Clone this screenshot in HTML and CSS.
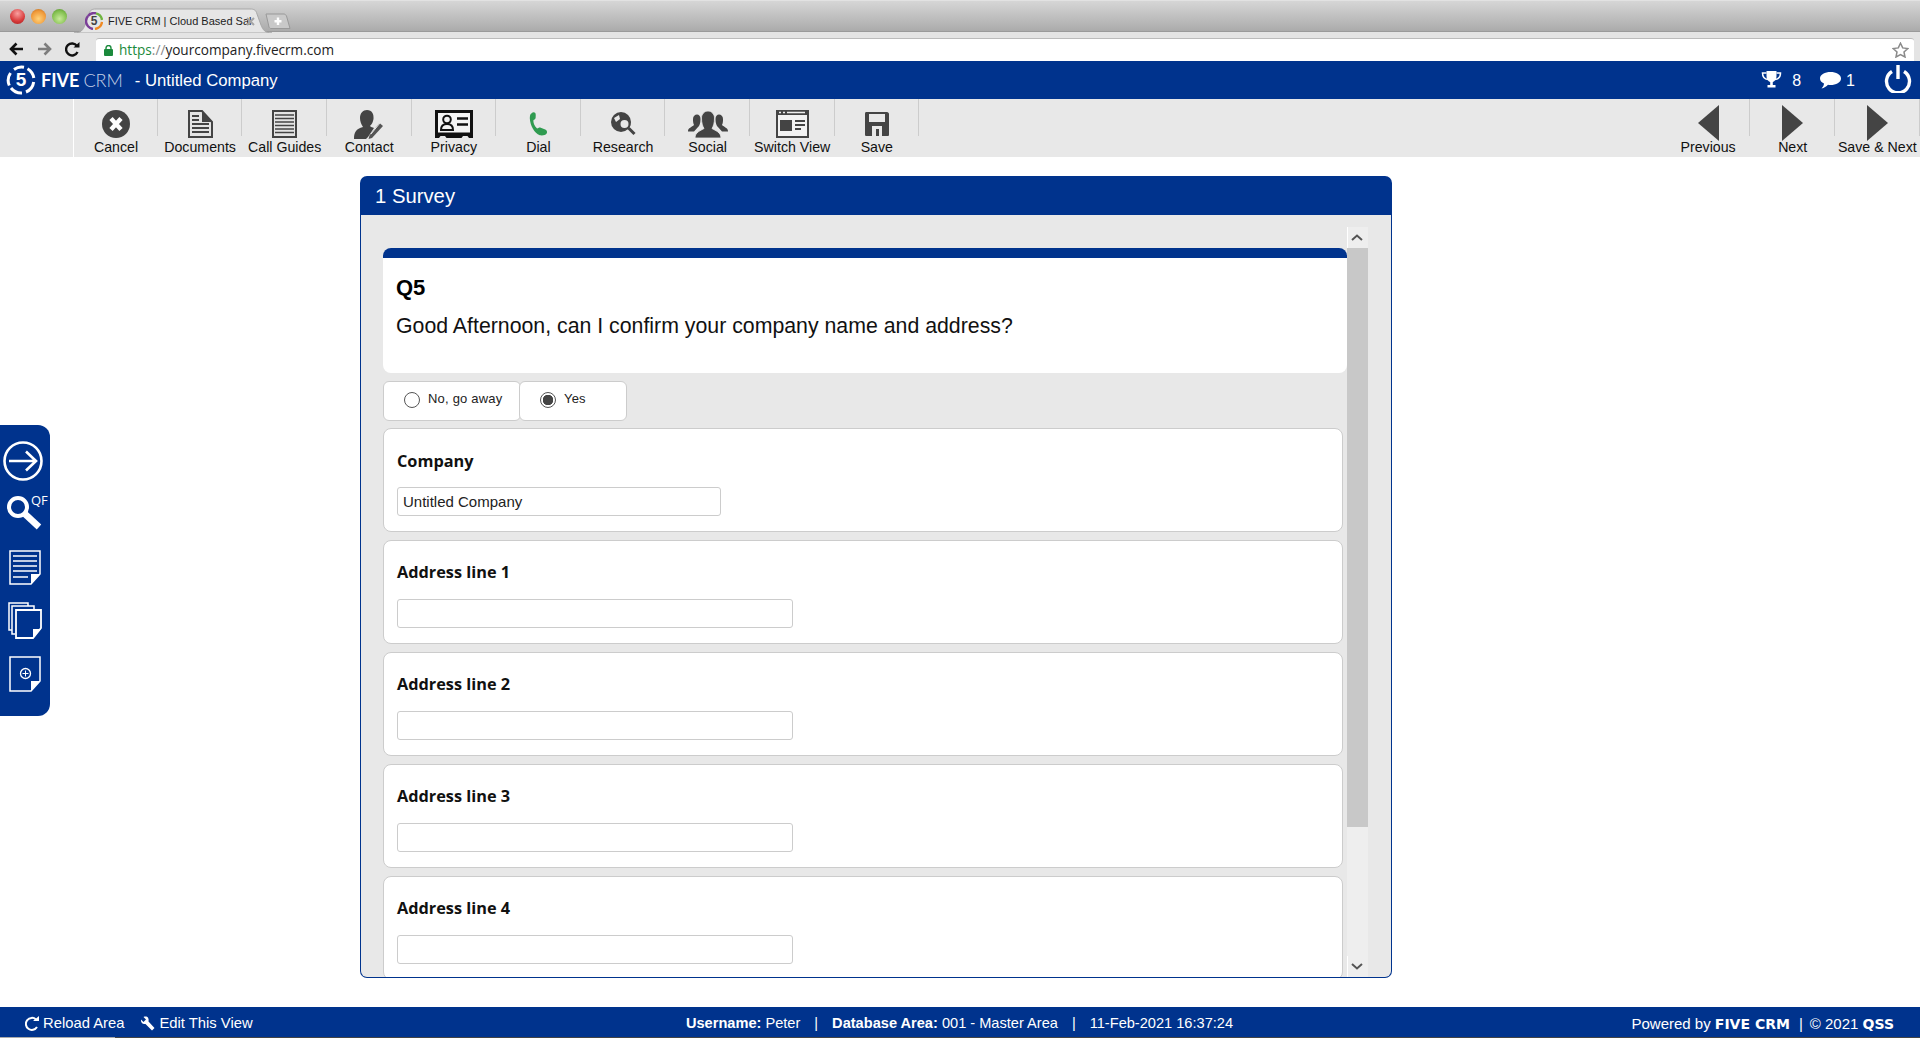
FILE: index.html
```html
<!DOCTYPE html>
<html lang="en">
<head>
<meta charset="utf-8">
<title>FIVE CRM | Cloud Based Sales</title>
<link rel="stylesheet" href="styles.css">
</head>
<body>
<div class="tabstrip">
  <span class="dot dot-red"></span><span class="dot dot-amber"></span><span class="dot dot-green"></span>
  <div class="tab">
    <svg class="tab-shape" width="198" height="25" viewBox="0 0 198 25"><path d="M0 25C7 25 9 22 11 17L15 6C16 2 18 1 22 1H176C180 1 182 2 183 6L187 17C189 22 191 25 198 25Z" fill="#e6e6e6" stroke="#a8a8a8"/></svg>
    <svg class="favicon" width="18" height="18" viewBox="0 0 18 18"><g fill="none" stroke-width="2.4"><path d="M3 4A8 8 0 0 1 11 1.3" stroke="#7b3f98"/><path d="M11 1.3A8 8 0 0 1 17 8" stroke="#6fb43f"/><path d="M17 10A8 8 0 0 1 10 17" stroke="#f08a24"/><path d="M8 17A8 8 0 0 1 1 9A8 8 0 0 1 3 4" stroke="#7b3f98"/></g><text x="9" y="13" class="favicon-5">5</text></svg>
    <span class="tab-title">FIVE CRM | Cloud Based Sal</span>
    <svg class="tab-close" width="9" height="9" viewBox="0 0 9 9"><path d="M1 1L8 8M8 1L1 8" stroke="#a5a5a5" stroke-width="2"/></svg>
  </div>
  <svg class="newtab" width="26" height="17" viewBox="0 0 26 17"><path d="M1 1H19C20 1 21 2 21.500 3L25 15.500H6C5 15.500 4.500 15 4 14Z" fill="#c9c9c9" stroke="#999"/><path d="M13 4.500V12M9.500 8.200H16.500" stroke="#fff" stroke-width="2.400"/></svg>
</div>

<div class="navbar">
  <svg class="nav-ico" width="15" height="14" viewBox="0 0 15 14"><path d="M14 7H3M7.500 1.500L2 7L7.500 12.500" fill="none" stroke="#111" stroke-width="2.600"/></svg>
  <svg class="nav-ico" width="15" height="14" viewBox="0 0 15 14"><path d="M1 7H12M7.500 1.500L13 7L7.500 12.500" fill="none" stroke="#7d7d7d" stroke-width="2.600"/></svg>
  <svg class="nav-ico nav-ico-last" width="15" height="15" viewBox="0 0 15 15"><path d="M12.500 10A6 6 0 1 1 12 4" fill="none" stroke="#111" stroke-width="2.400"/><path d="M8.500 5.500H14.500V0Z" fill="#111"/></svg>
  <div class="urlbar">
    <svg width="9" height="11" viewBox="0 0 9 11"><rect y="4" width="9" height="7" rx="1" fill="#1b8a3c"/><path d="M2 5V3A2.500 2.500 0 0 1 7 3V5" fill="none" stroke="#1b8a3c" stroke-width="1.400"/></svg>
    <span class="url"><span class="url-https">https</span><span class="url-sep">://</span>yourcompany.fivecrm.com</span>
    <svg class="star" width="17" height="16" viewBox="0 0 17 16"><path d="M8.500 1.200L10.700 5.900L15.800 6.500L12 10L13 15L8.500 12.500L4 15L5 10L1.200 6.500L6.300 5.900Z" fill="none" stroke="#8a8a8a" stroke-width="1.500"/></svg>
  </div>
</div>

<header class="appbar">
  <svg class="logo" width="30" height="30" viewBox="0 0 30 30"><g fill="none" stroke="#fff" stroke-width="3"><path d="M8 4.500A13 13 0 0 1 18 2.300"/><path d="M21.500 3.700A13 13 0 0 1 27.800 13"/><path d="M27.700 17A13 13 0 0 1 20 27"/><path d="M16 28A13 13 0 0 1 5 23"/><path d="M3.300 20.500A13 13 0 0 1 4.500 8"/></g><text x="15" y="21" class="logo-5">5</text></svg>
  <span class="brand"><b>FIVE</b><span class="brand-crm">CRM</span></span>
  <span class="app-title">- Untitled Company</span>
  <div class="appbar-right">
    <svg width="21" height="18" viewBox="0 0 21 18"><path d="M5.500 0H15.500V5C15.500 9 13 10.500 11.800 11V14H14.500V16.500H6.500V14H9.200V11C8 10.500 5.500 9 5.500 5Z" fill="#fff"/><path d="M5.500 2H1.500C1.500 6 3 8 7 8.500M15.500 2H19.500C19.500 6 18 8 14 8.500" fill="none" stroke="#fff" stroke-width="1.500"/></svg>
    <span class="count count-trophy">8</span>
    <svg width="21" height="17" viewBox="0 0 21 17"><path d="M10.500 0C16 0 21 2.500 21 6.500C21 10.500 16 13 10.500 13C9.500 13 8.500 13 8 12.800C6.500 14.500 4 16 1.500 16.500C3 15 3.800 13.500 4 11.500C1.500 10.500 0 8.500 0 6.500C0 2.500 5 0 10.500 0Z" fill="#fff"/></svg>
    <span class="count count-msg">1</span>
    <svg class="power" width="28" height="28" viewBox="0 0 28 28"><path d="M8 6.500A11.500 11.500 0 1 0 20 6.500" fill="none" stroke="#fff" stroke-width="3.400"/><path d="M14 0V14" stroke="#fff" stroke-width="3.400"/></svg>
  </div>
</header>

<nav class="toolbar">
  <div class="tool">
    <span class="tool-ico"><svg width="28" height="28" viewBox="0 0 28 28"><circle cx="14" cy="14" r="14" fill="#444"/><path d="M9 8.500L19 19.500M19 8.500L9 19.500" stroke="#fff" stroke-width="4.400"/></svg></span>
    <span class="tool-label">Cancel</span>
  </div>
  <div class="tool">
    <span class="tool-ico"><svg width="25" height="28" viewBox="0 0 25 28"><path d="M1 1H14L24 12V27H1Z" fill="#e4e4e4" stroke="#444" stroke-width="2"/><path d="M14 1V12H24Z" fill="#444"/><path d="M4 6H11M4 10H11M4 14H21M4 18H21M4 22H21" stroke="#444" stroke-width="1.800"/></svg></span>
    <span class="tool-label">Documents</span>
  </div>
  <div class="tool">
    <span class="tool-ico"><svg width="25" height="28" viewBox="0 0 25 28"><rect x="1" y="1" width="23" height="26" fill="#e4e4e4" stroke="#444" stroke-width="2"/><path d="M3 5H22M3 8.500H22M3 12H22M3 15.500H22M3 19H22M3 22.500H22" stroke="#444" stroke-width="1.700"/></svg></span>
    <span class="tool-label">Call Guides</span>
  </div>
  <div class="tool">
    <span class="tool-ico"><svg width="30" height="29" viewBox="0 0 30 29"><path d="M13 0C18 0 20 4 19.500 9C19 12 18 14 16 16C17 17 18.500 17.500 20 18L14 27L12 29H0C0 22 2 19 9 17C7 14 6 11 6 8C6 3 9 0 13 0Z" fill="#444"/><path d="M18 28L14.500 29L15.500 25.500L25.500 13L29 16Z" fill="#555"/><path d="M17 24L26 13" stroke="#e8e8e8" stroke-width="1"/></svg></span>
    <span class="tool-label">Contact</span>
  </div>
  <div class="tool">
    <span class="tool-ico"><svg width="38" height="28" viewBox="0 0 38 28"><path d="M1.500 1.500H36.500V24H1.500Z" fill="#f4f4f4" stroke="#111" stroke-width="3"/><path d="M0 24H38V28H34L32.500 26H28L26.500 28H11.500L10 26H5.500L4 28H0Z" fill="#111"/><circle cx="12" cy="9.500" r="3.800" fill="none" stroke="#111" stroke-width="2"/><path d="M6 20C6 15 9 14 12 14C15 14 18 15 18 20Z" fill="none" stroke="#111" stroke-width="2"/><path d="M22 8.500H33M22 14.500H33" stroke="#111" stroke-width="2.600"/></svg></span>
    <span class="tool-label">Privacy</span>
  </div>
  <div class="tool">
    <span class="tool-ico"><svg width="20" height="26" viewBox="0 0 22 26"><path d="M3 2C4 1 5 0 6 0C8 0 8.500 1 8.500 3L8.400 6C8.400 7.500 7 8 6 8.500C5.500 11 7 15 10 18C11 17.500 12.500 16.500 14 17L19 19C21 20 21.500 22 20.500 23.500C19 25.500 16 26 13 25.500C7 23 2.500 15 2 7C2 5 2.200 3 3 2Z" fill="#2f9b50"/></svg></span>
    <span class="tool-label">Dial</span>
  </div>
  <div class="tool">
    <span class="tool-ico"><svg width="25" height="24" viewBox="0 0 25 24"><circle cx="10" cy="10" r="10" fill="#444"/><path d="M3 6L8 3L9 7L5 10ZM13 14L16 13L15 18Z" fill="#e8e8e8"/><circle cx="13.500" cy="12" r="5" fill="#e8e8e8" stroke="#444" stroke-width="2"/><path d="M17.500 16L23.500 22" stroke="#444" stroke-width="3"/></svg></span>
    <span class="tool-label">Research</span>
  </div>
  <div class="tool">
    <span class="tool-ico"><svg width="40" height="27" viewBox="0 0 40 27"><path d="M0 20C0 17 4 16 6 14C5 12 5 10 5 8C5 5 7 3.500 9 3.500C11 3.500 12.500 5 12.500 8C12.500 11 12 13 11 15L6 20.500H0ZM40 20C40 17 36 16 34 14C35 12 35 10 35 8C35 5 33 3.500 31 3.500C29 3.500 27.500 5 27.500 8C27.500 11 28 13 29 15L34 20.500H40Z" fill="#444"/><path d="M7 27C7 21 13 19.500 16 17.500C14.500 15 13.500 12 13.500 7C13.500 3 16.500 0 20 0C23.500 0 26.500 3 26.500 7C26.500 12 25.500 15 24 17.500C27 19.500 33 21 33 27Z" fill="#444" stroke="#e8e8e8" stroke-width="0.800"/></svg></span>
    <span class="tool-label">Social</span>
  </div>
  <div class="tool">
    <span class="tool-ico"><svg width="33" height="28" viewBox="0 0 33 28"><path d="M1 1H32V27H1Z" fill="#f2f2f2" stroke="#444" stroke-width="2"/><path d="M0 0H33V5H0Z" fill="#444"/><path d="M3 2.500H5M7 2.500H9M11 2.500H29" stroke="#eee" stroke-width="1.500"/><rect x="4" y="10" width="12" height="11" fill="#444"/><path d="M19 11H29M19 15H29M19 19H25" stroke="#444" stroke-width="2"/></svg></span>
    <span class="tool-label">Switch View</span>
  </div>
  <div class="tool">
    <span class="tool-ico"><svg width="24" height="24" viewBox="0 0 24 24"><path d="M0 1.500C0 .5.500 0 1.500 0H22C23 0 24 1 24 2V22.500C24 23.500 23.500 24 22.500 24H1.500C.5 24 0 23.500 0 22.500Z" fill="#444"/><rect x="4" y="2" width="16" height="8" fill="#e8e8e8"/><path d="M7 24V14H17V24Z" fill="#e8e8e8"/><rect x="11" y="17" width="3" height="7" fill="#444"/></svg></span>
    <span class="tool-label">Save</span>
  </div>
  <div class="tool-nav">
    <div class="tool">
      <span class="tool-ico"><svg class="tri" width="21" height="36" viewBox="0 0 21 36"><path d="M21 0V36L0 18Z" fill="#444"/></svg></span>
      <span class="tool-label">Previous</span>
    </div>
    <div class="tool">
      <span class="tool-ico"><svg class="tri" width="21" height="36" viewBox="0 0 21 36"><path d="M0 0V36L21 18Z" fill="#444"/></svg></span>
      <span class="tool-label">Next</span>
    </div>
    <div class="tool">
      <span class="tool-ico"><svg class="tri" width="21" height="36" viewBox="0 0 21 36"><path d="M0 0V36L21 18Z" fill="#444"/></svg></span>
      <span class="tool-label">Save &amp; Next</span>
    </div>
  </div>
</nav>

<aside class="sidebar">
  <svg width="42" height="42" viewBox="0 0 42 42"><circle cx="21" cy="21" r="18.500" fill="none" stroke="#fff" stroke-width="2.600"/><path d="M7 21H33M24 11.500L34 21L24 30.500" fill="none" stroke="#fff" stroke-width="2.600"/></svg>
  <div class="side-search">
    <svg width="38" height="36" viewBox="0 0 38 36"><circle cx="13" cy="12" r="9" fill="none" stroke="#fff" stroke-width="4"/><path d="M20 19L34 32" stroke="#fff" stroke-width="6.500"/></svg>
    <span class="qf">QF</span>
  </div>
  <svg width="32" height="35" viewBox="0 0 32 35"><path d="M1 1H31V24L22 34H1Z" fill="none" stroke="#fff" stroke-width="1.500"/><path d="M22 34V24H31Z" fill="#fff"/><path d="M4 6H28M4 11H28M4 16H28M4 21H28M4 27H19" stroke="#fff" stroke-width="1.600"/></svg>
  <svg width="34" height="37" viewBox="0 0 34 37"><path d="M4 28H1V1H20V4" fill="none" stroke="#fff" stroke-width="1.500"/><path d="M7 32H4V4H26V8" fill="none" stroke="#fff" stroke-width="1.500"/><path d="M8 8H33V26L25 36H8Z" fill="none" stroke="#fff" stroke-width="1.800"/><path d="M25 36V27H33Z" fill="#fff"/></svg>
  <svg width="32" height="36" viewBox="0 0 32 36"><path d="M1 1H31V25L22 35H1Z" fill="none" stroke="#fff" stroke-width="1.500"/><path d="M22 35V25H31Z" fill="#fff"/><circle cx="16.500" cy="17.500" r="5" fill="none" stroke="#fff" stroke-width="1.300"/><path d="M16.500 14.500V20.500M13.500 17.500H19.500" stroke="#fff" stroke-width="1"/></svg>
</aside>

<main class="content">
  <section class="panel">
    <h1 class="panel-head">1 Survey</h1>
    <div class="panel-body">
      <div class="scroll-view">
        <div class="q-card">
          <div class="q-code">Q5</div>
          <div class="q-text">Good Afternoon, can I confirm your company name and address?</div>
        </div>
        <div class="radio-group">
          <label class="radio radio-no"><span class="radio-mark"></span><span class="radio-text">No, go away</span></label>
          <label class="radio radio-yes"><span class="radio-mark radio-mark-on"></span><span class="radio-text">Yes</span></label>
        </div>
        <div class="field field-first"><div class="field-label">Company</div><div class="input input-short">Untitled Company</div></div>
        <div class="field"><div class="field-label">Address line 1</div><div class="input"></div></div>
        <div class="field"><div class="field-label">Address line 2</div><div class="input"></div></div>
        <div class="field"><div class="field-label">Address line 3</div><div class="input"></div></div>
        <div class="field"><div class="field-label">Address line 4</div><div class="input"></div></div>
      </div>
      <div class="scrollbar">
        <div class="sb-btn"><svg width="12" height="7" viewBox="0 0 12 7"><path d="M1 6L6 1.500L11 6" fill="none" stroke="#555" stroke-width="2"/></svg></div>
        <div class="sb-thumb"></div>
        <div class="sb-track"></div>
        <div class="sb-btn"><svg width="12" height="7" viewBox="0 0 12 7"><path d="M1 1L6 5.500L11 1" fill="none" stroke="#555" stroke-width="2"/></svg></div>
      </div>
    </div>
  </section>
</main>

<footer class="footer">
  <div class="foot-left">
    <span class="foot-link"><svg width="14" height="15" viewBox="0 0 14 15"><path d="M12 11A6 6 0 1 1 11 3.500" fill="none" stroke="#fff" stroke-width="2"/><path d="M8 5H14V0Z" fill="#fff"/></svg>Reload Area</span>
    <span class="foot-link"><svg width="15" height="15" viewBox="0 0 15 15"><path d="M1 3.500L3.500 6L6 3.500L3.500 1C5.500 0 8 .5 8.500 3C8.800 4 8.500 5 8.500 5.500L14.500 12L12 14.500L5.500 8C3.500 8.500 .5 7 1 3.500Z" fill="#fff"/></svg>Edit This View</span>
  </div>
  <div class="foot-center"><b>Username:</b> Peter<span class="foot-sep">|</span><b>Database Area:</b> 001 - Master Area<span class="foot-sep">|</span>11-Feb-2021 16:37:24</div>
  <div class="foot-right">Powered by <b class="foot-strong">FIVE CRM</b><span class="foot-sep-small">|</span>© 2021 <b class="foot-strong">QSS</b></div>
</footer>
</body>
</html>
```
FILE: styles.css
```css
* { box-sizing: border-box; }
html, body { margin: 0; height: 100%; }
body {
  height: 1038px;
  display: flex;
  flex-direction: column;
  overflow: hidden;
  background: #fff;
  color: #111;
  font-family: "Liberation Sans", Arial, sans-serif;
}

/* browser chrome */
.tabstrip {
  height: 32px;
  flex: none;
  display: flex;
  align-items: flex-start;
  padding: 10px 0 0 10px;
  background: linear-gradient(#d6d6d6, #ababab);
  border-top: 1px solid #e2e2e2;
  border-bottom: 1px solid #9a9a9a;
}
.dot { width: 15px; height: 15px; border-radius: 50%; margin-right: 6px; flex: none; margin-top: -2px; }
.dot-red { background: radial-gradient(circle at 50% 30%, #f9a0a0, #d83a3a 60%, #a02020); }
.dot-amber { background: radial-gradient(circle at 50% 65%, #ffd27a, #f09a3a 60%, #b5651d); }
.dot-green { background: radial-gradient(circle at 50% 65%, #c8ea9a, #83c04f 60%, #4f8a2a); }
.tab {
  position: relative;
  width: 198px;
  height: 24px;
  margin: -3px 0 0 1px;
  padding: 4px 0 0 11px;
  display: flex;
  align-items: flex-start;
}
.tab-shape { position: absolute; left: 0; top: 0; }
.favicon, .tab-title, .tab-close { position: relative; }
.favicon { flex: none; }
.favicon-5 { font: bold 12px "Liberation Sans", sans-serif; fill: #444; text-anchor: middle; }
.tab-title { margin-left: 5px; font: 11px/18px "Liberation Sans", sans-serif; color: #222; white-space: nowrap; width: 134px; }
.tab-close { margin: 5px 0 0 4px; }
.newtab { margin: 2px 0 0 -7px; }

.navbar {
  height: 29px;
  flex: none;
  display: flex;
  align-items: flex-start;
  padding: 6px 6px 0 9px;
  background: #e4e4e4;
}
.nav-ico { flex: none; margin: 4px 13px 0 0; }
.nav-ico-last { margin-right: 16px; }
.urlbar {
  flex: 1;
  height: 23px;
  padding: 0 5px 0 8px;
  display: flex;
  align-items: center;
  background: #fff;
  border-top: 1px solid #bbb;
  border-radius: 3px 3px 0 0;
}
.url { margin-left: 6px; font: 13.600px/20px "Open Sans", sans-serif; color: #222; }
.url-https { color: #1b8a3c; }
.url-sep { color: #888; }
.star { margin-left: auto; }

/* application header */
.appbar {
  height: 38px;
  flex: none;
  display: flex;
  align-items: center;
  padding: 0 8px 0 6px;
  background: #00338d;
  color: #fff;
}
.logo-5 { font: bold 19px "Liberation Sans", sans-serif; fill: #fff; text-anchor: middle; }
.brand { margin-left: 5px; font: 18px/24px Lato, sans-serif; }
.brand b { font-weight: 700; }
.brand-crm { margin-left: 4px; font-weight: 300; color: #c4d0e6; }
.app-title { margin-left: 12px; padding-top: 1px; font-size: 16.700px; }
.appbar-right { margin-left: auto; display: flex; align-items: center; }
.count { font-size: 16px; }
.count-trophy { margin: 2px 19px 0 10px; }
.count-msg { margin: 2px 29px 0 5px; }
.power { margin-bottom: 2px; }

/* toolbar */
.toolbar {
  height: 58px;
  flex: none;
  display: flex;
  padding: 0 .4px 0 73.200px;
  background: #e8e8e8;
}
.toolbar > .tool:first-child { border-left: 1px solid #fff; }
.tool {
  width: 84.600px;
  flex: none;
  display: flex;
  flex-direction: column;
  align-items: center;
  padding-top: 10px;
  background: linear-gradient(#ccc, #ccc) right top / 1px 37px no-repeat;
}
.tool-ico { height: 30px; display: flex; align-items: center; justify-content: center; }
.tool-ico svg { display: block; }
.tool-ico .tri { margin-top: -2px; }
.tool-label { font-size: 14.200px; line-height: 16px; color: #111; white-space: nowrap; }
.tool-nav { margin-left: auto; display: flex; }

/* floating left rail */
.sidebar {
  position: absolute;
  left: 0;
  top: 425px;
  width: 50px;
  height: 291px;
  display: flex;
  flex-direction: column;
  align-items: flex-start;
  padding: 15px 0 0 2px;
  background: #00338d;
  border-radius: 0 12px 12px 0;
}
.sidebar > svg:nth-child(3) { margin: 19px 0 0 7px; }
.sidebar > svg:nth-child(4) { margin: 17px 0 0 6px; }
.sidebar > svg:nth-child(5) { margin: 17px 0 0 7px; }
.side-search { position: relative; margin: 13px 0 0 3px; height: 36px; }
.qf { position: absolute; left: 26px; top: -2px; color: #fff; font: 13px/14px "Open Sans", sans-serif; }

/* survey panel */
.content { flex: 1; min-height: 0; padding: 19px 0 0 360px; }
.panel { width: 1032px; height: 802px; display: flex; flex-direction: column; overflow: hidden; border-radius: 7px; background: #00338d; }
.panel-head { margin: 0; height: 39px; flex: none; padding-left: 15px; font-size: 20.300px; font-weight: 400; line-height: 40px; color: #fff; }
.panel-body {
  flex: 1;
  min-height: 0;
  display: flex;
  margin: 0 1px 1px;
  padding: 12px 23px 0 22px;
  background: #e8e8e8;
  border-radius: 0 0 6px 6px;
}
.scroll-view { width: 964px; flex: none; overflow: hidden; padding-top: 21px; }
.q-card {
  height: 125px;
  padding: 18px 13px 0;
  background: #fff;
  border-top: 10px solid #00338d;
  border-radius: 8px;
}
.q-code { font-size: 22px; font-weight: 700; line-height: 24px; color: #000; }
.q-text { margin-top: 14px; font-size: 21.300px; line-height: 24px; color: #111; }
.radio-group { display: flex; margin: 8px 0 7px; }
.radio {
  height: 40px;
  display: flex;
  align-items: flex-start;
  padding: 9px 0 0 20px;
  background: #fff;
  border: 1px solid #ccc;
  border-radius: 6px;
  font-size: 13px;
  color: #222;
}
.radio-no { width: 138px; }
.radio-yes { width: 108px; margin-left: -2px; }
.radio-mark { width: 16px; height: 16px; margin-top: 1px; border: 1px solid #555; border-radius: 50%; flex: none; }
.radio-mark-on { background: radial-gradient(circle, #444 0 5px, #fff 5.500px); }
.radio-text { margin-left: 8px; line-height: 15px; letter-spacing: .2px; }
.field {
  width: 960px;
  height: 104px;
  margin-bottom: 8px;
  padding: 19px 13px 0;
  background: #fff;
  border: 1px solid #ccc;
  border-radius: 8px;
}
.field-first { padding-top: 20px; }
.field-first .input { margin-top: 14px; }
.field-label { height: 24px; font: 700 16.300px/24px "Open Sans", sans-serif; color: #111; }
.input {
  width: 396px;
  height: 29px;
  margin-top: 15px;
  padding: 0 5px;
  background: #fff;
  border: 1px solid #ccc;
  border-radius: 3px;
  font-size: 15px;
  line-height: 27px;
  color: #222;
}
.input-short { width: 324px; }
.scrollbar { width: 21px; flex: none; display: flex; flex-direction: column; background: #eee; }
.sb-btn { height: 21px; flex: none; display: flex; align-items: center; justify-content: center; padding-right: 2px; border-left: 1px solid #fff; }
.sb-thumb { height: 579px; flex: none; background: #c8c8c8; }
.sb-track { flex: 1; }

/* footer */
.footer {
  height: 31px;
  flex: none;
  display: grid;
  grid-template-columns: 1fr auto 1fr;
  align-items: center;
  padding: 1px 26px 0 25px;
  background: linear-gradient(90deg, #aaa 115px, #444 115px) left bottom / 100% 1px no-repeat, #00338d;
  font-size: 14.600px;
  color: #fff;
}
.foot-left { display: flex; font-size: 14.800px; }
.foot-link { display: flex; align-items: center; margin-right: 16px; }
.foot-link svg { margin-right: 4px; }
.foot-sep { margin: 0 14px; }
.foot-right { justify-self: end; font-size: 15px; }
.foot-strong { font-family: "DejaVu Sans", sans-serif; font-size: 14px; }
.foot-sep-small { margin: 0 7px 0 9px; }
```
